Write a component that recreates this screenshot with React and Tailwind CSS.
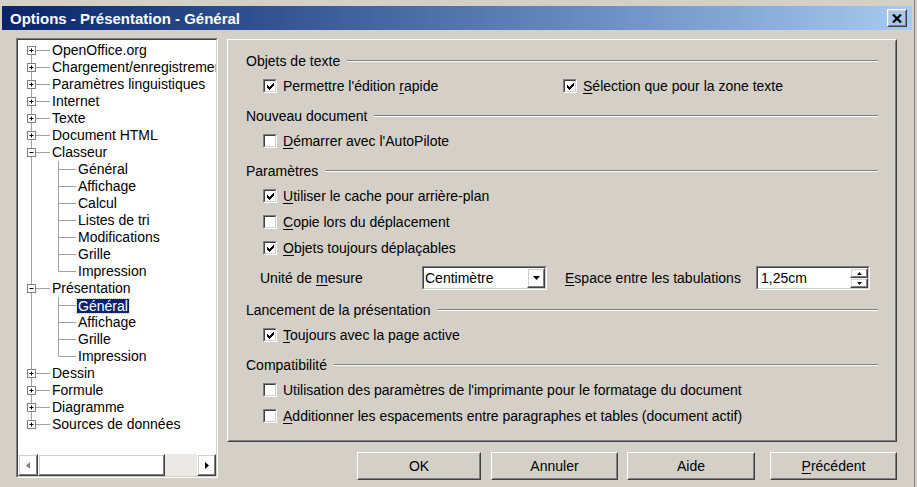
import React from 'react';

const Raised = ({ className = '', innerClass = '', children }) => (
  <div className={"border border-t-white border-l-white border-r-[#404040] border-b-[#404040] " + className}>
    <div className={"w-full h-full border border-t-[#d4d0c8] border-l-[#d4d0c8] border-r-[#808080] border-b-[#808080] " + innerClass}>
      {children}
    </div>
  </div>
);

const Sunken = ({ className = '', innerClass = '', children }) => (
  <div className={"border border-t-[#808080] border-l-[#808080] border-r-white border-b-white " + className}>
    <div className={"w-full h-full border border-t-[#404040] border-l-[#404040] border-r-[#d4d0c8] border-b-[#d4d0c8] " + innerClass}>
      {children}
    </div>
  </div>
);

const checkPixels = [
  [6, 0], [5, 1], [6, 1], [0, 2], [4, 2], [5, 2], [6, 2],
  [0, 3], [1, 3], [3, 3], [4, 3], [5, 3],
  [0, 4], [1, 4], [2, 4], [3, 4], [4, 4],
  [1, 5], [2, 5], [3, 5], [2, 6],
];

const Check = ({ checked }) => (
  <Sunken className="w-[14px] h-[14px] shrink-0" innerClass="bg-white flex items-center justify-center">
    {checked && (
      <svg width="7" height="7" viewBox="0 0 7 7" shapeRendering="crispEdges">
        {checkPixels.map(([x, y], i) => (
          <rect key={i} x={x} y={y} width="1" height="1" fill="#000" />
        ))}
      </svg>
    )}
  </Sunken>
);

const Header = ({ children, first }) => (
  <div className={"flex items-center h-[24px] " + (first ? "" : "mt-[5px]")}>
    <span className="whitespace-nowrap">{children}</span>
    <div className="flex-1 ml-[7px] border-t border-t-[#808080] border-b border-b-white"></div>
  </div>
);

const CheckItem = ({ checked, children }) => (
  <div className="flex items-center">
    <Check checked={checked} />
    <span className="ml-[6px] whitespace-nowrap">{children}</span>
  </div>
);

const CheckRow = ({ checked, children }) => (
  <div className="flex items-center h-[26px] pl-[17px]">
    <CheckItem checked={checked}>{children}</CheckItem>
  </div>
);

const U = ({ children }) => <span className="underline underline-offset-2">{children}</span>;

const tree = [
  { t: 'OpenOffice.org', k: 'plus' },
  { t: 'Chargement/enregistrement', k: 'plus' },
  { t: 'Paramètres linguistiques', k: 'plus' },
  { t: 'Internet', k: 'plus' },
  { t: 'Texte', k: 'plus' },
  { t: 'Document HTML', k: 'plus' },
  { t: 'Classeur', k: 'minus' },
  { t: 'Général', k: 'child' },
  { t: 'Affichage', k: 'child' },
  { t: 'Calcul', k: 'child' },
  { t: 'Listes de tri', k: 'child' },
  { t: 'Modifications', k: 'child' },
  { t: 'Grille', k: 'child' },
  { t: 'Impression', k: 'child', last: true },
  { t: 'Présentation', k: 'minus' },
  { t: 'Général', k: 'child', sel: true },
  { t: 'Affichage', k: 'child' },
  { t: 'Grille', k: 'child' },
  { t: 'Impression', k: 'child', last: true },
  { t: 'Dessin', k: 'plus' },
  { t: 'Formule', k: 'plus' },
  { t: 'Diagramme', k: 'plus' },
  { t: 'Sources de données', k: 'plus', lastRoot: true },
];

const LINE = '#a0a0a0';

const RootGlyph = ({ kind, first, last }) => (
  <svg width="34" height="17" viewBox="0 0 34 17" className="shrink-0">
    {!first && <line x1="13.5" y1="0" x2="13.5" y2="4.5" stroke={LINE} />}
    {!last && <line x1="13.5" y1="12.5" x2="13.5" y2="17" stroke={LINE} />}
    <line x1="18" y1="8.5" x2="32" y2="8.5" stroke={LINE} />
    <rect x="9.5" y="4.5" width="8" height="8" fill="#fff" stroke="#808080" />
    <line x1="11.5" y1="8.5" x2="15.5" y2="8.5" stroke="#000" />
    {kind === 'plus' && <line x1="13.5" y1="6.5" x2="13.5" y2="10.5" stroke="#000" />}
  </svg>
);

const ChildGlyph = ({ last }) => (
  <svg width="60" height="17" viewBox="0 0 60 17" className="shrink-0">
    <line x1="13.5" y1="0" x2="13.5" y2="17" stroke={LINE} />
    <line x1="40.5" y1="0" x2="40.5" y2={last ? 8.5 : 17} stroke={LINE} />
    <line x1="40.5" y1="8.5" x2="58" y2="8.5" stroke={LINE} />
  </svg>
);

const Tree = () => (
  <Sunken className="w-[202px] h-[440px] mt-[8px] shrink-0" innerClass="bg-white flex flex-col">
    <div className="flex-1 overflow-hidden pt-[2px]">
      {tree.map((n, i) => (
        <div key={i} className="flex items-center h-[17px] whitespace-nowrap">
          {n.k === 'child' ? (
            <ChildGlyph last={n.last} />
          ) : (
            <RootGlyph kind={n.k} first={i === 0} last={n.lastRoot} />
          )}
          {n.sel ? (
            <span className="bg-[#0a246a] text-white leading-[14px] px-[1px] -ml-[1px] outline outline-1 outline-dotted outline-[#c8c890]">{n.t}</span>
          ) : (
            <span>{n.t}</span>
          )}
        </div>
      ))}
    </div>
    <div className="flex h-[22px] shrink-0">
      <Raised className="w-[20px] h-full" innerClass="flex items-center justify-center">
        <svg width="4" height="7" viewBox="0 0 4 7"><path d="M4 0 L0 3.5 L4 7Z" fill="#808080" /></svg>
      </Raised>
      <Raised className="w-[127px] h-full" />
      <div className="flex-1 bg-[#ebe9e5]" />
      <Raised className="w-[19px] h-full" innerClass="flex items-center justify-center">
        <svg width="4" height="7" viewBox="0 0 4 7"><path d="M0 0 L4 3.5 L0 7Z" fill="#000" /></svg>
      </Raised>
    </div>
  </Sunken>
);

const Panel = () => (
  <Raised className="w-[670px] h-[403px] mt-[9px]" innerClass="px-[17px] pt-[8px] flex flex-col">
    <Header first>Objets de texte</Header>
    <div className="flex items-center h-[26px] pl-[17px]">
      <div className="w-[300px]">
        <CheckItem checked>Permettre l'édition <U>r</U>apide</CheckItem>
      </div>
      <CheckItem checked><U>S</U>élection que pour la zone texte</CheckItem>
    </div>

    <Header>Nouveau document</Header>
    <CheckRow><U>D</U>émarrer avec l'AutoPilote</CheckRow>

    <Header>Paramètres</Header>
    <CheckRow checked><U>U</U>tiliser le cache pour arrière-plan</CheckRow>
    <CheckRow><U>C</U>opie lors du déplacement</CheckRow>
    <CheckRow checked><U>O</U>bjets toujours déplaçables</CheckRow>
    <div className="flex items-center h-[30px] mt-[2px] pl-[14px]">
      <span className="w-[162px] whitespace-nowrap">Unité de <U>m</U>esure</span>
      <Sunken className="w-[125px] h-[24px]" innerClass="bg-white flex items-stretch">
        <span className="flex-1 pl-[1px] flex items-center">Centimètre</span>
        <Raised className="w-[18px]" innerClass="flex items-center justify-center">
          <svg width="7" height="4" viewBox="0 0 7 4"><path d="M0 0 L7 0 L3.5 4Z" fill="#000" /></svg>
        </Raised>
      </Sunken>
      <span className="ml-[18px] w-[191px] whitespace-nowrap"><U>E</U>space entre les tabulations</span>
      <Sunken className="w-[114px] h-[24px]" innerClass="bg-white flex items-stretch">
        <span className="flex-1 pl-[3px] flex items-center">1,25cm</span>
        <div className="w-[18px] flex flex-col">
          <Raised className="flex-1" innerClass="flex items-center justify-center">
            <svg width="5" height="3" viewBox="0 0 5 3"><path d="M0 3 L5 3 L2.5 0Z" fill="#000" /></svg>
          </Raised>
          <Raised className="flex-1" innerClass="flex items-center justify-center">
            <svg width="5" height="3" viewBox="0 0 5 3"><path d="M0 0 L5 0 L2.5 3Z" fill="#000" /></svg>
          </Raised>
        </div>
      </Sunken>
    </div>

    <Header>Lancement de la présentation</Header>
    <CheckRow checked><U>T</U>oujours avec la page active</CheckRow>

    <Header>Compatibilité</Header>
    <CheckRow>Utilisation des paramètres de l'imprimante pour le formatage du document</CheckRow>
    <CheckRow><U>A</U>dditionner les espacements entre paragraphes et tables (document actif)</CheckRow>
  </Raised>
);

const Btn = ({ className = '', children }) => (
  <Raised className={"h-[28px] " + className} innerClass="flex items-center justify-center">
    {children}
  </Raised>
);

export default function App() {
  return (
    <div className="w-[917px] h-[487px] bg-[#d4d0c8] overflow-hidden font-['Liberation_Sans',Arial,sans-serif] text-[14px] text-black leading-[17px]">
      <div className="w-[915px] h-[487px] border-r border-r-[#808080] px-[2px] pt-[6px]">
        <div className="h-[24px] flex items-center bg-linear-to-r from-[#0a246a] to-[#a6caf0] pl-[8px] pr-[5px]">
          <span className="flex-1 text-white font-bold text-[15px] whitespace-nowrap">Options - Présentation - Général</span>
          <Raised className="w-[20px] h-[18px]" innerClass="flex items-center justify-center">
            <svg width="10" height="9" viewBox="0 0 10 9">
              <path d="M1 0.5 L9 8.5 M9 0.5 L1 8.5" stroke="#000" strokeWidth="2.2" />
            </svg>
          </Raised>
        </div>
        <div className="flex pl-[14px]">
          <Tree />
          <div className="ml-[9px] flex flex-col">
            <Panel />
            <div className="flex mt-[10px]">
              <Btn className="ml-[130px] w-[124px]">OK</Btn>
              <Btn className="ml-[10px] w-[127px]">Annuler</Btn>
              <Btn className="ml-[9px] w-[128px]">Aide</Btn>
              <Btn className="ml-[15px] w-[127px]"><U>P</U>récédent</Btn>
            </div>
          </div>
        </div>
      </div>
    </div>
  );
}
